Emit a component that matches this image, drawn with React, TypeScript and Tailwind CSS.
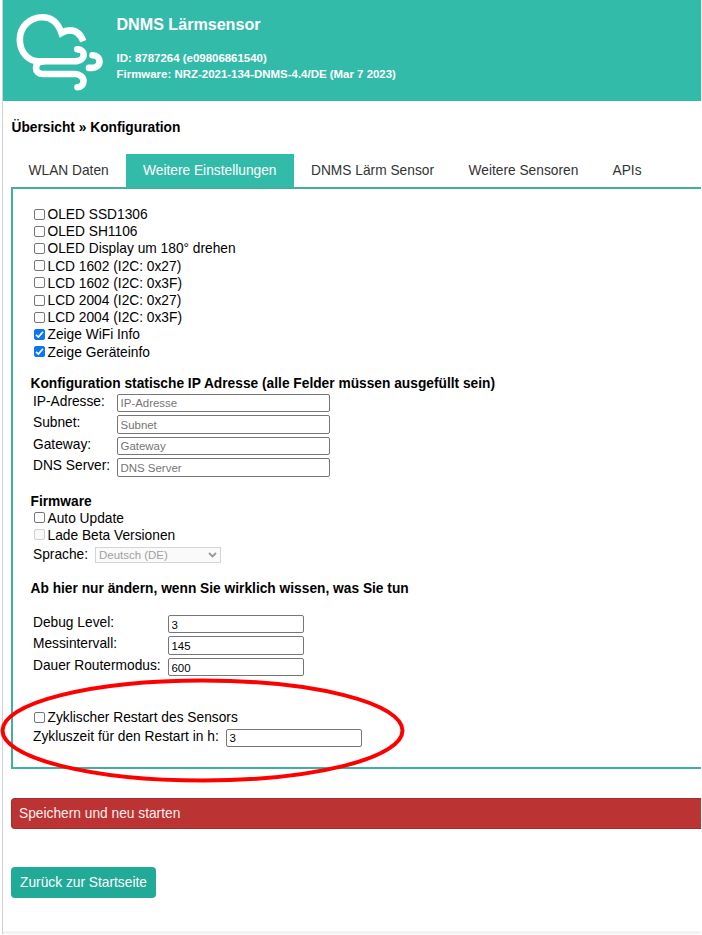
import React from "react";

function Check({ label, checked = false, disabled = false }: { label: string; checked?: boolean; disabled?: boolean }) {
  return (
    <label className="flex h-[17.2px] items-center">
      <span
        className={
          "mb-[1px] mr-[2.500px] flex size-[11px] shrink-0 items-center justify-center rounded-[2px] border " +
          (checked ? "border-[#0a75f5] bg-[#0a75f5]" : disabled ? "border-[#d0d0d0] bg-[#f8f8f8]" : "border-[#767676] bg-white")
        }
      >
        {checked && (
          <svg viewBox="0 0 11 11" className="size-[11px] shrink-0" fill="none" stroke="white" strokeWidth="1.7">
            <path d="M2 5.8 4.4 8.1 9 2.8" />
          </svg>
        )}
      </span>
      <span className="pt-[1.500px]">{label}</span>
    </label>
  );
}

function Field({ label, labelClass, inputClass, value, placeholder }: { label: string; labelClass: string; inputClass: string; value?: string; placeholder?: string }) {
  return (
    <div className="flex h-[21.5px] items-start">
      <span className={"shrink-0 leading-[17px] " + labelClass}>{label}</span>
      <input
        className={"mt-[1px] h-[18.5px] rounded-[2px] border border-[#767676] bg-white px-[2.500px] pt-px text-[11.46px] text-black placeholder:text-[#757575] " + inputClass}
        defaultValue={value}
        placeholder={placeholder}
      />
    </div>
  );
}

const displays = [
  "OLED SSD1306",
  "OLED SH1106",
  "OLED Display um 180° drehen",
  "LCD 1602 (I2C: 0x27)",
  "LCD 1602 (I2C: 0x3F)",
  "LCD 2004 (I2C: 0x27)",
  "LCD 2004 (I2C: 0x3F)",
];

export default function App() {
  return (
    <div className="relative h-[935px] w-[702px] overflow-hidden bg-white pl-[2px] pr-px font-['Liberation_Sans',Arial,sans-serif] text-[13.76px] text-black">
      <div className="flex h-[934px] flex-col border-l border-[#cfd0d8]">
        <header className="flex h-[101px] shrink-0 bg-[#33bbaa] text-white">
          <svg viewBox="0 0 110 100" className="-ml-[3px] h-[100px] w-[110px] shrink-0" fill="none" stroke="white" strokeWidth="6.6">
            <path d="M83.300 41.200C80.5 34 76 30.4 70 30.4C66.500 30.400 64 31.300 61.500 32.800C58 23 51.500 17.200 42.500 17.200C29 17.200 19.800 27.500 19.800 39.500C19.800 51.500 27.500 61.300 39 61.300H74.500C80.500 61.300 83.700 58 83.700 54.500C83.700 51.500 81 49.300 77.300 49.300" />
            <path d="M77.300 49.300h.1M77.500 87.200C81 87.200 83.500 84.500 83.500 81C83.500 77 79.500 74 75 74H43C38.500 74 36 71.500 36 68C36 64.500 38.500 61.500 43 61.500M92.500 55.300C97 55.300 99.500 58 99.500 61.500C99.500 65.500 96 67.900 92 67.900H89" strokeLinecap="round" />
          </svg>
          <div className="ml-[6.500px] flex flex-col font-bold">
            <div className="mt-[14px] text-[16.1px] leading-[20px]">DNMS Lärmsensor</div>
            <div className="mt-[16px] text-[11.46px] leading-[16px]">
              <div>ID: 8787264 (e09806861540)</div>
              <div>Firmware: NRZ-2021-134-DNMS-4.4/DE (Mar 7 2023)</div>
            </div>
          </div>
        </header>
        <main className="flex flex-col pl-[8px]">
          <div className="mt-[17px] h-[20px] pl-[0.500px] font-bold leading-[20px]">Übersicht » Konfiguration</div>
          <nav className="mt-[16px] flex h-[33px] leading-[34px] text-[#333]">
            <span className="w-[115px] pl-[17.500px]">WLAN Daten</span>
            <span className="w-[168px] bg-[#33bbaa] pl-[17px] text-white">Weitere Einstellungen</span>
            <span className="w-[158px] pl-[17px]">DNMS Lärm Sensor</span>
            <span className="w-[144px] pl-[16.500px]">Weitere Sensoren</span>
            <span className="pl-[16.500px]">APIs</span>
          </nav>
          <section className="flex h-[582px] flex-col border-y-2 border-l-2 border-[#3fb19d] pl-[17px]">
            <div className="mt-[17px] pl-[4px]">
              {displays.map((d) => (
                <Check key={d} label={d} />
              ))}
              <Check label="Zeige WiFi Info" checked />
              <Check label="Zeige Geräteinfo" checked />
            </div>
            <div className="mt-[14px] pl-[0.500px] font-bold leading-[17px]">Konfiguration statische IP Adresse (alle Felder müssen ausgefüllt sein)</div>
            <div className="mt-[1px] pl-[3px]">
              {["IP-Adresse", "Subnet", "Gateway", "DNS Server"].map((f) => (
                <Field key={f} label={f + ":"} placeholder={f} labelClass="w-[84px]" inputClass="w-[213px]" />
              ))}
            </div>
            <div className="mt-[14px] pl-[0.500px] font-bold leading-[17px]">Firmware</div>
            <div className="pl-[4px]">
              <Check label="Auto Update" />
              <Check label="Lade Beta Versionen" disabled />
            </div>
            <div className="mt-[1px] flex h-[18px] items-center pl-[3px]">
              <span className="w-[62px] pt-[1.500px]">Sprache:</span>
              <span className="mt-px flex h-[16px] w-[126px] items-center justify-between border border-[#d5d5d5] bg-[#fafafa] pl-[3px] pr-[3px] text-[11.46px] leading-[14px] text-[#a0a0a0]">
                Deutsch (DE)
                <svg viewBox="0 0 9 6" className="h-[6px] w-[9px]" fill="none" stroke="#999" strokeWidth="1.8">
                  <path d="m1 1 3.500 3.500L8 1" />
                </svg>
              </span>
            </div>
            <div className="mt-[17px] pl-[0.500px] font-bold leading-[17px]">Ab hier nur ändern, wenn Sie wirklich wissen, was Sie tun</div>
            <div className="mt-[16.800px] pl-[3px]">
              <Field label="Debug Level:" value="3" labelClass="w-[135px]" inputClass="w-[136px]" />
              <Field label="Messintervall:" value="145" labelClass="w-[135px]" inputClass="w-[136px]" />
              <Field label="Dauer Routermodus:" value="600" labelClass="w-[135px]" inputClass="w-[136px]" />
            </div>
            <div className="mt-[31px] pl-[4px]">
              <Check label="Zyklischer Restart des Sensors" />
            </div>
            <div className="mt-[1px] pl-[3px]">
              <Field label="Zykluszeit für den Restart in h:" value="3" labelClass="w-[193px]" inputClass="w-[136px]" />
            </div>
          </section>
          <button className="mt-[29px] h-[31px] rounded-l-[4px] border-y border-l border-[#a52b2f] bg-[#bb3333] pl-[7px] pt-[1.500px] text-left text-[#fff0ee]">Speichern und neu starten</button>
          <button className="mt-[38px] h-[31px] w-[145px] rounded-[4px] bg-[#22aa99] pt-[1.500px] text-center text-white">Zurück zur Startseite</button>
        </main>
        <footer className="mt-auto h-[3px] shrink-0 bg-[#f3f3f3]" />
      </div>
      <svg viewBox="0 0 420 120" className="pointer-events-none absolute left-0 top-[670px] h-[120px] w-[420px]" fill="none">
        <ellipse cx="202.500" cy="60.500" rx="200" ry="50" stroke="#ff0000" strokeWidth="4" />
      </svg>
    </div>
  );
}
